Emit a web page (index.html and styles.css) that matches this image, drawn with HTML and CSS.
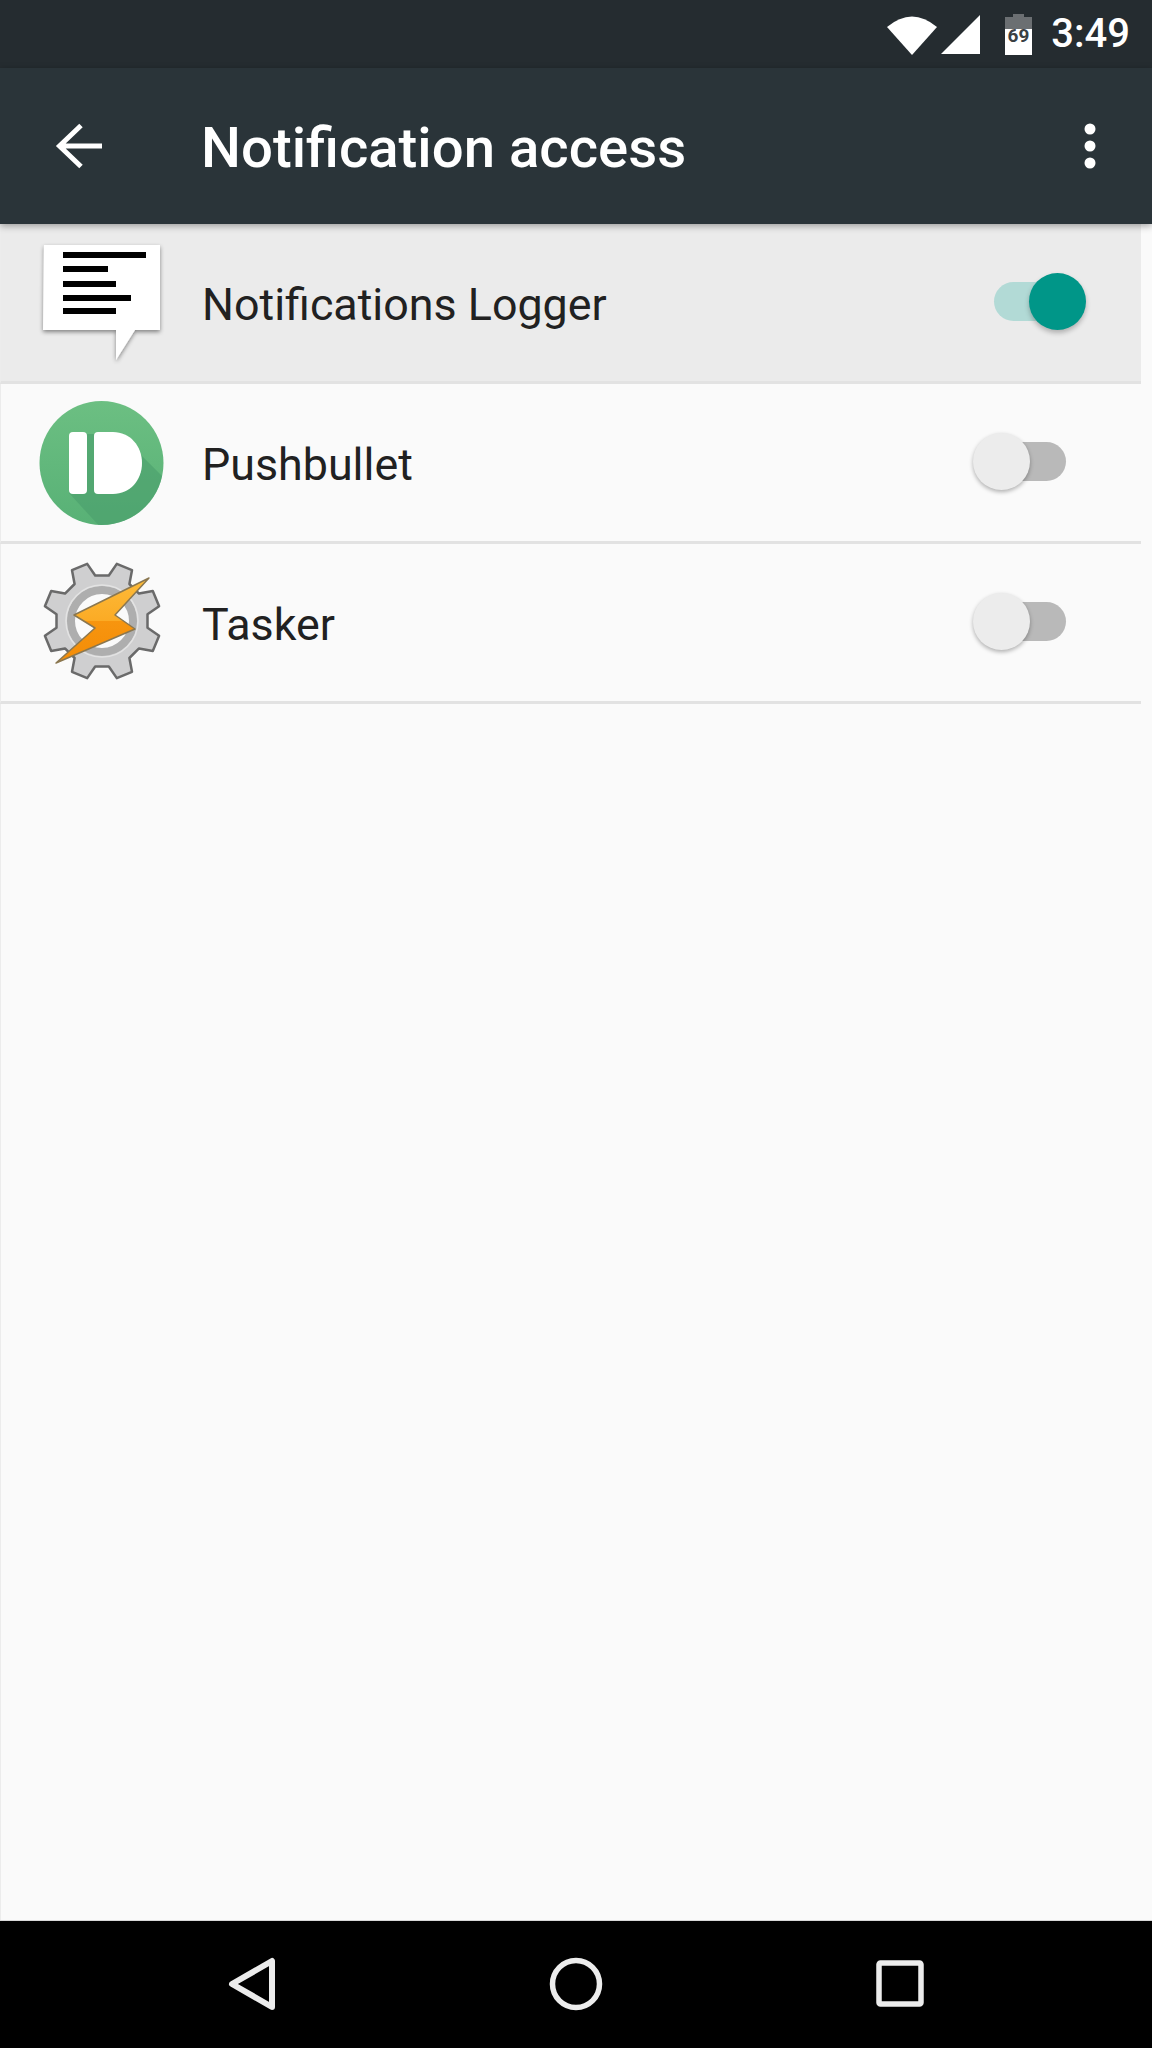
FILE: index.html
```html
<!DOCTYPE html>
<html lang="en">
<head>
<meta charset="utf-8">
<title>Notification access</title>
<link rel="stylesheet" href="styles.css">
</head>
<body>
<div class="page">
  <header class="status-bar">
    <svg class="st-wifi" width="52" height="42" viewBox="0 0 52 42"><path d="M1 14 Q26 -7 51 14 L26 42 Z" fill="#fff"/></svg>
    <svg class="st-signal" width="41" height="41" viewBox="0 0 41 41"><path d="M40 1 V40 H1 Z" fill="#fff"/></svg>
    <svg class="st-battery" width="27" height="41" viewBox="0 0 27 41">
      <path d="M8 0 H19 V3 H27 V15 H0 V3 H8 Z" fill="#6b6f72"/>
      <rect x="0" y="15" width="27" height="26" fill="#fff"/>
      <text x="13.5" y="28" text-anchor="middle" class="st-batt-text">69</text>
    </svg>
    <span class="st-time">3:49</span>
  </header>
  <div class="app-bar">
    <svg class="back" width="48" height="48" viewBox="0 0 48 48"><path d="M47 24 H5 M26 3.500 L4.500 24 L26 44.500" fill="none" stroke="#fff" stroke-width="5"/></svg>
    <h1 class="title">Notification access</h1>
    <svg class="more" width="12" height="46" viewBox="0 0 12 46"><circle cx="6" cy="6" r="5.500" fill="#fff"/><circle cx="6" cy="23" r="5.500" fill="#fff"/><circle cx="6" cy="40" r="5.500" fill="#fff"/></svg>
  </div>
  <main class="list">
    <div class="row row-active">
      <svg class="app-icon" width="200" height="158" viewBox="0 0 200 158">
        <defs><filter id="ds" x="-10%" y="-10%" width="120%" height="120%"><feDropShadow dx="0" dy="2" stdDeviation="2" flood-color="#000" flood-opacity=".45"/></filter></defs>
        <path d="M44 21 H160 V106 H135 L116 136 V106 H43 Z" fill="#fff" filter="url(#ds)"/>
        <path d="M63 28 H146 V34 H63 Z M63 42 H108 V48 H63 Z M63 57 H116 V63 H63 Z M63 71 H131 V77 H63 Z M63 84 H116 V90 H63 Z" fill="#000"/>
      </svg>
      <span class="row-label">Notifications Logger</span>
      <div class="switch switch-on"><span class="thumb"></span></div>
    </div>
    <div class="row">
      <svg class="app-icon" width="200" height="158" viewBox="0 0 200 158">
        <defs>
          <linearGradient id="pb" x1="0" y1="0" x2="0" y2="1"><stop offset="0" stop-color="#6cbf82"/><stop offset="1" stop-color="#58b176"/></linearGradient>
          <clipPath id="pbc"><circle cx="101.500" cy="79" r="62"/></clipPath>
        </defs>
        <circle cx="101.500" cy="79" r="62" fill="url(#pb)"/>
        <path d="M87 50 L94 50 L94 60 L130 60 L175 105 L125 170 L69 109 Z" fill="#4b9f6d" opacity=".65" clip-path="url(#pbc)"/>
        <rect x="69" y="48" width="18" height="62" rx="4" fill="#fff"/>
        <path d="M98 48 H113 C130 48 142 62 142 79 C142 96 130 110 113 110 H98 Q94 110 94 106 V52 Q94 48 98 48 Z" fill="#fff"/>
      </svg>
      <span class="row-label">Pushbullet</span>
      <div class="switch"><span class="thumb"></span></div>
    </div>
    <div class="row">
      <svg class="app-icon" width="200" height="158" viewBox="0 0 200 158">
        <defs>
          <linearGradient id="bolt" x1="0" y1="0" x2="0" y2="1"><stop offset="0" stop-color="#fdbb3a"/><stop offset=".5" stop-color="#fbab25"/><stop offset=".51" stop-color="#f7950f"/><stop offset="1" stop-color="#f48c06"/></linearGradient>
        </defs>
        <g transform="translate(102 77)">
          <polygon points="45.500,6.800 57.100,14.800 50.800,30 37,27.400 27.400,37 30,50.800 14.800,57.100 6.800,45.500 -6.800,45.500 -14.800,57.100 -30,50.800 -27.400,37 -37,27.400 -50.800,30 -57.100,14.800 -45.500,6.800 -45.500,-6.800 -57.100,-14.800 -50.800,-30 -37,-27.400 -27.400,-37 -30,-50.800 -14.800,-57.100 -6.800,-45.500 6.800,-45.500 14.800,-57.100 30,-50.800 27.400,-37 37,-27.400 50.800,-30 57.100,-14.800 45.500,-6.800" fill="#cfcfd0" stroke="#6a6a6a" stroke-width="2.500" stroke-linejoin="round"/>
          <circle r="31" fill="#fafafa" stroke="#aeaeae" stroke-width="8"/>
          <circle r="36" fill="none" stroke="#e3e3e3" stroke-width="1.500"/>
        </g>
        <polygon points="149,34 74,71 95,84 56,119 135,85 115,71" fill="url(#bolt)" stroke="#8a7750" stroke-width="1.500" stroke-linejoin="round"/>
      </svg>
      <span class="row-label">Tasker</span>
      <div class="switch"><span class="thumb"></span></div>
    </div>
  </main>
  <nav class="nav-bar">
    <svg width="60" height="60" viewBox="0 0 60 60"><path d="M50 7 V53 L10 30 Z" fill="none" stroke="#ececec" stroke-width="6" stroke-linejoin="round"/></svg>
    <svg width="60" height="60" viewBox="0 0 60 60"><circle cx="30" cy="30" r="23.500" fill="none" stroke="#ececec" stroke-width="5.500"/></svg>
    <svg width="60" height="60" viewBox="0 0 60 60"><rect x="9" y="9" width="42" height="41" rx="1.500" fill="none" stroke="#ececec" stroke-width="5.500"/></svg>
  </nav>
</div>
</body>
</html>
```
FILE: styles.css
```css
* { box-sizing: border-box; }
html, body { margin: 0; padding: 0; }
body { font-family: Roboto, "Liberation Sans", sans-serif; background: #fafafa; }
.page { width: 1152px; height: 2048px; display: flex; flex-direction: column; overflow: hidden; }

.status-bar {
  height: 68px; flex: none; background: #252c30;
  display: flex; align-items: center; justify-content: flex-end; padding-right: 22px; color: #fff;
}
.st-wifi { margin-right: 2px; }
.st-signal { margin-right: 24px; }
.st-battery { margin-right: 19px; }
.st-batt-text { font: 700 19px Roboto, sans-serif; fill: #3a4043; }
.st-time { font-size: 40px; font-weight: 500; line-height: 68px; }

.app-bar {
  height: 156px; flex: none; background: #2a3439; position: relative; z-index: 2;
  display: flex; align-items: center; padding: 0 56px 0 55px;
  box-shadow: 0 2px 7px rgba(0, 0, 0, .35);
}
.back { margin-right: 98px; flex: none; }
.title { margin: 0; flex: 1; font-size: 56.3px; font-weight: 500; color: #fff; line-height: 60px; padding-top: 3px; }
.more { flex: none; }

.list { flex: 1; border-left: 1px solid #ececec; }
.row {
  width: 1141px; height: 160px; margin-left: -1px;
  display: flex; align-items: center; padding-right: 75px;
  border-bottom: 3px solid #e2e2e2; border-left: 1px solid #ececec;
}
.row-active { background: #ebebeb; }
.app-icon { flex: none; margin-left: -1px; margin-right: 2px; }
.row-label { flex: 1; font-size: 44.8px; color: #212121; padding-top: 3px; }

.switch {
  position: relative; width: 72px; height: 39px; border-radius: 20px; background: #b9b9b9;
  margin-bottom: 2px; flex: none;
}
.thumb {
  position: absolute; top: -9px; left: -21px; width: 57px; height: 57px; border-radius: 50%;
  background: #ececec; box-shadow: 0 2px 4px rgba(0, 0, 0, .3);
}
.switch-on { background: #b2dad6; }
.switch-on .thumb { left: auto; right: -20px; background: #009688; box-shadow: 0 3px 5px rgba(0, 0, 0, .25); }

.nav-bar {
  height: 128px; flex: none; background: #000;
  display: flex; align-items: center; justify-content: center; gap: 264px;
  border-top: 1px solid #d8d8d8; padding-bottom: 2px;
}
```
